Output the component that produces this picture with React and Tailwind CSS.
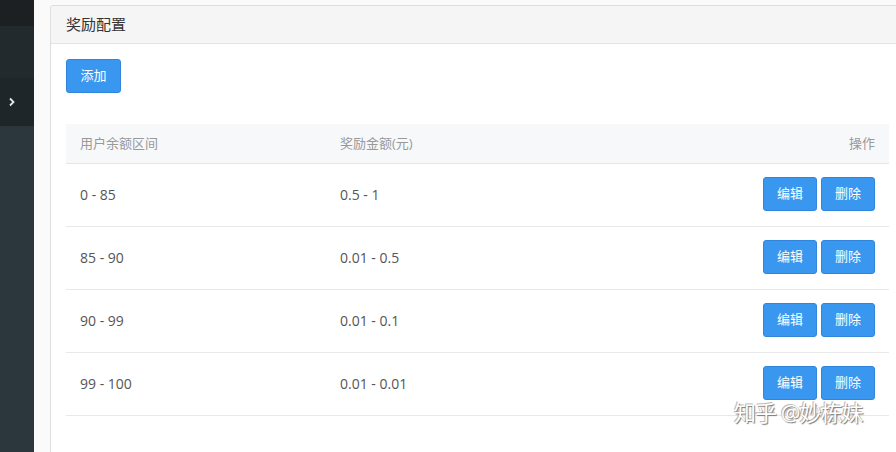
import React from "react";

const rows = [
  { range: "0 - 85", amount: "0.5 - 1" },
  { range: "85 - 90", amount: "0.01 - 0.5" },
  { range: "90 - 99", amount: "0.01 - 0.1" },
  { range: "99 - 100", amount: "0.01 - 0.01" },
];

const font = { fontFamily: '"Open Sans", "Noto Sans CJK SC", sans-serif' };

function Btn({ children, className = "" }) {
  return (
    <button
      className={`h-[34px] rounded-[3px] border border-[#2f86dc] bg-[#3a97f0] text-[13px] text-white ${className}`}
    >
      {children}
    </button>
  );
}

export default function App() {
  return (
    <div className="flex h-[452px] w-[896px] overflow-hidden bg-white text-[#555]" style={font}>
      {/* sidebar */}
      <aside className="flex w-[34px] shrink-0 flex-col bg-[#2c373d]">
        <div className="h-[26px] bg-[#1c2023]" />
        <div className="h-[52px] bg-[#232a2e]" />
        <div className="flex h-[48px] items-center justify-center bg-[#1f2629] pr-[10px]">
          <svg width="8" height="10" viewBox="0 0 8 10" fill="none">
            <path d="M2 1.5 L5.5 5 L2 8.5" stroke="#e6e6e6" strokeWidth="1.8" />
          </svg>
        </div>
      </aside>

      {/* content */}
      <main className="flex-1 bg-[#fafafa] pl-[16px] pt-[5px]">
        <div className="relative h-full rounded-tl-[3px] border-l border-t border-[#dedede] bg-white">
          <div className="flex h-[38px] items-center border-b border-[#e3e3e3] bg-[#f5f5f5] pl-[15px] text-[15px] text-[#333]">
            奖励配置
          </div>

          <div className="px-[15px] pt-[15px]">
            <Btn className="w-[55px]">添加</Btn>

            <div className="mt-[31px] w-[823px]">
              <div className="flex h-[40px] items-center border-b border-[#e6e6e6] bg-[#f7f8f9] px-[14px] text-[13px] text-[#999]">
                <div className="w-[260px]">用户余额区间</div>
                <div className="flex-1">奖励金额(元)</div>
                <div>操作</div>
              </div>
              {rows.map((r) => (
                <div
                  key={r.range}
                  className="flex h-[63px] items-center border-b border-[#e8e8e8] pb-[2px] pl-[14px] pr-[14px] text-[14px] text-[#555]"
                >
                  <div className="w-[260px]">{r.range}</div>
                  <div className="flex-1">{r.amount}</div>
                  <div className="flex gap-[4px]">
                    <Btn className="w-[54px]">编辑</Btn>
                    <Btn className="w-[54px]">删除</Btn>
                  </div>
                </div>
              ))}
            </div>
          </div>

          {/* watermark */}
          <div
            className="absolute left-[683px] top-[390px] text-[22px] tracking-[-1px] text-white"
            style={{ textShadow: "1px 1px 1px #777, -1px -1px 0 #bbb" }}
          >
            知乎 @妙栋妹
          </div>
        </div>
      </main>
    </div>
  );
}
